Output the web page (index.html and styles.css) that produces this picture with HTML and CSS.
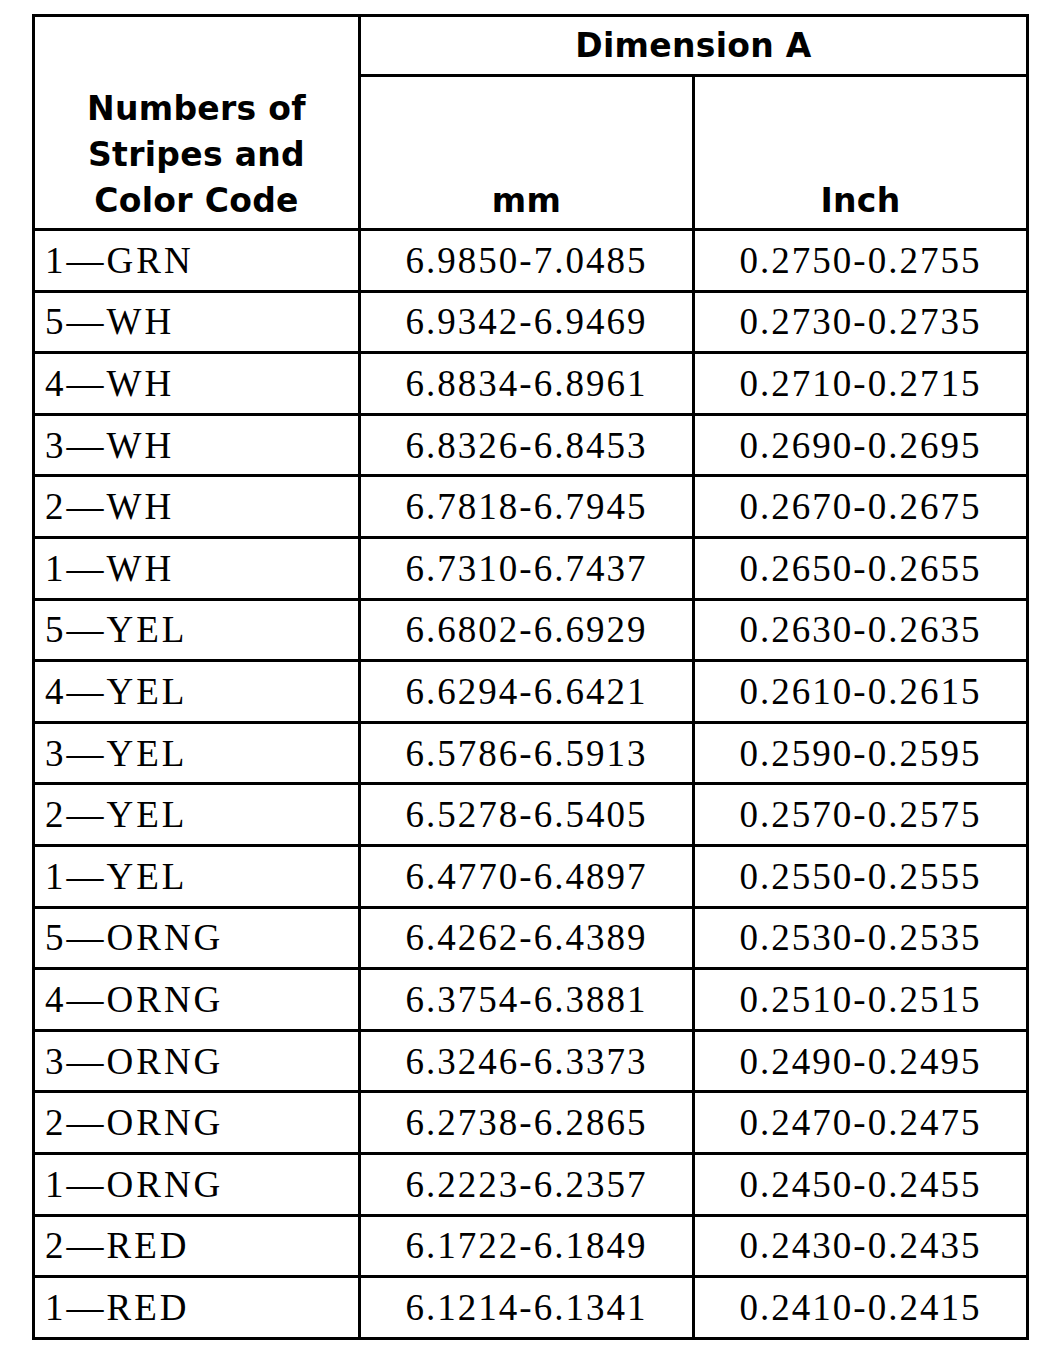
FILE: index.html
```html
<!DOCTYPE html>
<html lang="en">
<head>
    <meta charset="UTF-8">
    <meta name="viewport" content="width=device-width, initial-scale=1.0">
    <title>Stripe Color Code Table</title>
    <link rel="stylesheet" href="styles.css">
</head>
<body>
<table class="spec-table">
    <thead>
        <tr class="head-top">
            <th rowspan="2" class="code-head">Numbers of<br>Stripes and<br>Color Code</th>
            <th colspan="2" class="dim-head">Dimension A</th>
        </tr>
        <tr class="head-sub">
            <th class="unit-head">mm</th>
            <th class="unit-head">Inch</th>
        </tr>
    </thead>
    <tbody>
        <tr><td class="code">1—GRN</td><td>6.9850-7.0485</td><td>0.2750-0.2755</td></tr>
        <tr><td class="code">5—WH</td><td>6.9342-6.9469</td><td>0.2730-0.2735</td></tr>
        <tr><td class="code">4—WH</td><td>6.8834-6.8961</td><td>0.2710-0.2715</td></tr>
        <tr><td class="code">3—WH</td><td>6.8326-6.8453</td><td>0.2690-0.2695</td></tr>
        <tr><td class="code">2—WH</td><td>6.7818-6.7945</td><td>0.2670-0.2675</td></tr>
        <tr><td class="code">1—WH</td><td>6.7310-6.7437</td><td>0.2650-0.2655</td></tr>
        <tr><td class="code">5—YEL</td><td>6.6802-6.6929</td><td>0.2630-0.2635</td></tr>
        <tr><td class="code">4—YEL</td><td>6.6294-6.6421</td><td>0.2610-0.2615</td></tr>
        <tr><td class="code">3—YEL</td><td>6.5786-6.5913</td><td>0.2590-0.2595</td></tr>
        <tr><td class="code">2—YEL</td><td>6.5278-6.5405</td><td>0.2570-0.2575</td></tr>
        <tr><td class="code">1—YEL</td><td>6.4770-6.4897</td><td>0.2550-0.2555</td></tr>
        <tr><td class="code">5—ORNG</td><td>6.4262-6.4389</td><td>0.2530-0.2535</td></tr>
        <tr><td class="code">4—ORNG</td><td>6.3754-6.3881</td><td>0.2510-0.2515</td></tr>
        <tr><td class="code">3—ORNG</td><td>6.3246-6.3373</td><td>0.2490-0.2495</td></tr>
        <tr><td class="code">2—ORNG</td><td>6.2738-6.2865</td><td>0.2470-0.2475</td></tr>
        <tr><td class="code">1—ORNG</td><td>6.2223-6.2357</td><td>0.2450-0.2455</td></tr>
        <tr><td class="code">2—RED</td><td>6.1722-6.1849</td><td>0.2430-0.2435</td></tr>
        <tr><td class="code">1—RED</td><td>6.1214-6.1341</td><td>0.2410-0.2415</td></tr>
    </tbody>
</table>
</body>
</html>
```

FILE: styles.css
```css
body {
    margin: 0;
    padding: 14px 0 0 32px;
    background: #ffffff;
    color: #000000;
}

.spec-table {
    border-collapse: collapse;
    table-layout: fixed;
    width: 997px;
    border: 3px solid #000;
}

.spec-table th,
.spec-table td {
    border: 3px solid #000;
    padding: 0;
}

/* header cells: heavy sans */
.spec-table th {
    font-family: "DejaVu Sans", "Liberation Sans", sans-serif;
    font-weight: bold;
    font-size: 33px;
    letter-spacing: 0.3px;
    text-align: center;
}

.code-head {
    width: 323px;
    vertical-align: bottom;
    line-height: 46px;
    padding-bottom: 4px !important;
}

.head-top {
    height: 60px;
}

.dim-head {
    vertical-align: middle;
}

.head-sub {
    height: 154px;
}

.unit-head {
    vertical-align: bottom;
    padding-bottom: 8px !important;
}

/* data cells: Times-like serif */
.spec-table td {
    font-family: "Liberation Serif", "Times New Roman", serif;
    font-size: 37px;
    letter-spacing: 2px;
    text-align: center;
    height: 58.6px;
    vertical-align: middle;
}

.spec-table td.code {
    text-align: left;
    padding-left: 10px;
    letter-spacing: 3px;
}
```
